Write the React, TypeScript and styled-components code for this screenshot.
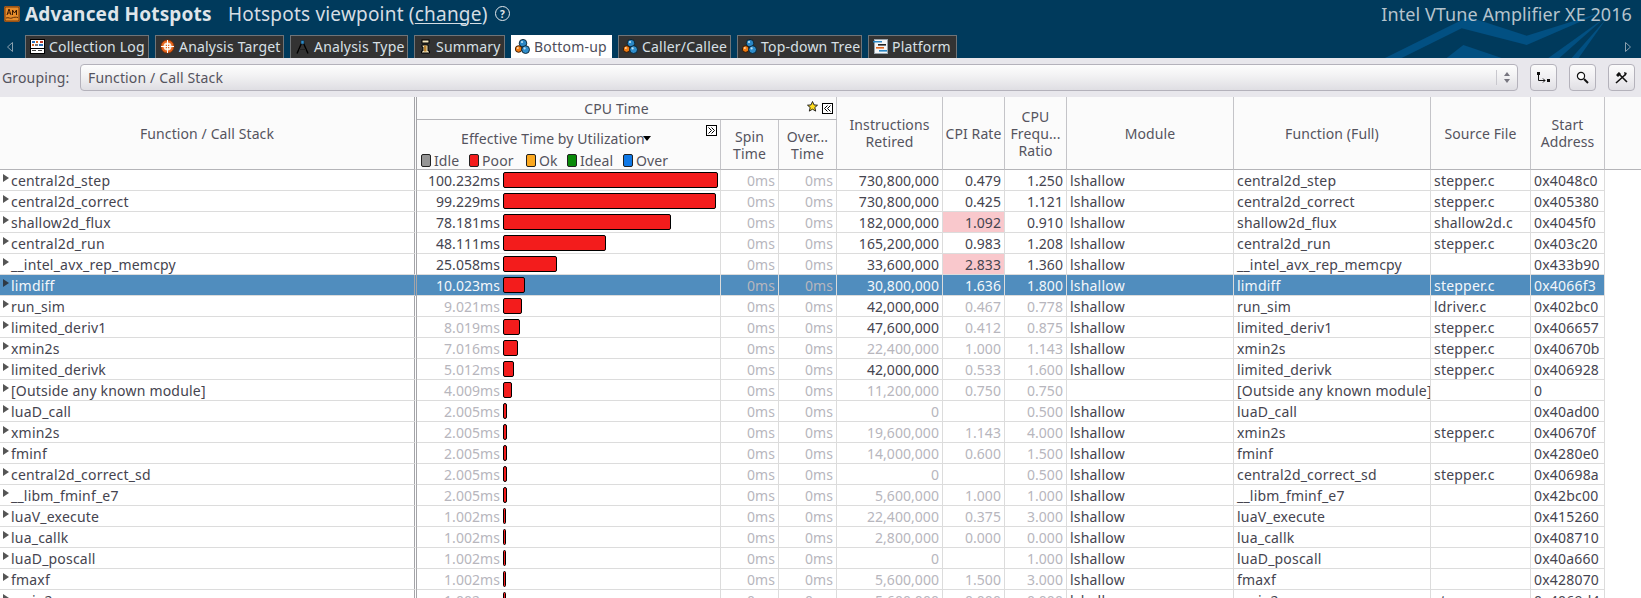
import React from "react";
import styled, { createGlobalStyle } from "styled-components";

const FONT = `"Noto Sans", "Open Sans", "DejaVu Sans", sans-serif`;
const COLS = "417px 304px 58px 58px 106px 62px 62px 167px 197px 100px 74px 1fr";

const Global = createGlobalStyle`
  html, body { margin: 0; padding: 0; background: #fff; overflow: hidden; }
  body { width: 1641px; height: 598px; font-family: ${FONT}; }
`;

const Page = styled.div`
  width: 1641px; height: 598px; overflow: hidden; display: flex; flex-direction: column;
`;
const Banner = styled.header`
  position: relative; height: 58px; background: #003a5c; color: #e4e8ec; overflow: hidden; flex: none;
`;
const Art = styled.svg`
  position: absolute; right: 0; top: 0; width: 441px; height: 58px;
`;
const TitleRow = styled.div`
  position: relative; display: flex; align-items: center; height: 35px; padding: 0 0 8px 4px; box-sizing: border-box;
`;
const TitleStrong = styled.span`
  font-size: 19px; font-weight: 700; margin-left: 5px; width: 203px; color: #dfe5ea; letter-spacing: 0.18px; white-space: nowrap;
`;
const TitleView = styled.span`
  font-size: 19px; color: #d5dde3; width: 265px; white-space: nowrap; letter-spacing: 0.2px;
  u { text-underline-offset: 2px; text-decoration-thickness: 1px; }
`;
const Help = styled.span`
  width: 13px; height: 13px; margin-left: 2px; border: 1px solid #e4e8ec; border-radius: 50%; font-size: 10px;
  display: flex; align-items: center; justify-content: center; font-weight: 700;
`;
const Product = styled.span`
  position: absolute; right: 9px; top: 2px; font-size: 18px; color: #b5c3cd; letter-spacing: 0.08px;
`;
const TabRow = styled.nav`
  position: relative; display: flex; gap: 6px; height: 23px; padding-left: 25px;
`;
const Arrow = styled.span<{ $side: "l" | "r" }>`
  position: absolute; top: 7px; ${(p) => (p.$side === "l" ? "left: 7px;" : "right: 10px;")}
  width: 6px; height: 10px; display: block;
  svg { display: block; }
`;
const Tab = styled.div<{ $w: number; $active?: boolean }>`
  width: ${(p) => p.$w}px; height: 23px; box-sizing: border-box; display: flex; align-items: center; gap: 4px;
  padding-left: 4px; padding-bottom: 1px; font-size: 14px; white-space: nowrap; letter-spacing: 0.2px;
  background: ${(p) => (p.$active ? "#fff" : "#333333")};
  color: ${(p) => (p.$active ? "#4d4d5a" : "#d8e0e6")};
  border: ${(p) => (p.$active ? "none" : "1px solid #6f7478")};
  border-bottom: none;
  svg { flex: none; }
`;
const Toolbar = styled.div`
  height: 39px; flex: none; background: #e8e7ec; display: flex; align-items: center; box-sizing: border-box;
  padding: 0 5px 0 2px; font-size: 14px; color: #55545e; letter-spacing: 0.15px;
`;
const GroupLabel = styled.span` width: 78px; flex: none; margin-top: -1px; `;
const Combo = styled.div`
  width: 1438px; height: 27px; box-sizing: border-box; margin-top: -1px; flex: none; border: 1px solid #b4b2bb; border-radius: 4px;
  background: linear-gradient(#fdfdfd, #f3f3f4 40%, #dfdee3);
  display: flex; align-items: center; justify-content: space-between; padding-left: 7px;
`;
const ComboArrows = styled.span`
  width: 20px; height: 15px; border-left: 1px solid #c9c8ce; display: flex; flex-direction: column; align-items: center; justify-content: center; gap: 3px;
  i { display: block; width: 0; height: 0; border-left: 3.5px solid transparent; border-right: 3.5px solid transparent; }
  i:first-child { border-bottom: 4px solid #77767f; }
  i:last-child { border-top: 4px solid #77767f; }
`;
const ToolButton = styled.button`
  width: 27px; height: 27px; padding: 0; margin: -1px 0 0 12px; box-sizing: border-box; border: 1px solid #b4b2bb; border-radius: 4px;
  background: linear-gradient(#fbfbfb, #f0eff2 50%, #e0dfe4); display: flex; align-items: center; justify-content: center;
`;
const HeaderGrid = styled.div`
  display: grid; grid-template-columns: ${COLS}; grid-template-rows: 23px 50px; height: 73px; flex: none;
  background: #fbfbfb; color: #55545e; font-size: 14px; line-height: 17px; letter-spacing: 0.1px;
`;
const HeadCell = styled.div<{ $col: string; $row: string; $sash?: boolean; $line?: boolean; $pad?: number }>`
  grid-column: ${(p) => p.$col}; grid-row: ${(p) => p.$row}; position: relative; box-sizing: border-box;
  display: flex; align-items: center; justify-content: center; text-align: center; white-space: nowrap;
  padding-right: ${(p) => p.$pad ?? 0}px;
  border-right: ${(p) => (p.$sash ? "3px double #a4a4a8" : p.$line === false ? "none" : "1px solid #c4c4c8")};
  border-bottom: 1px solid #b4b4b8;
`;
const StackedHead = styled.span`
  display: block;
`;
const EffCell = styled(HeadCell)`
  display: block;
`;
const EffTitle = styled.div`
  height: 33px; padding: 5px 0 2px 44px; box-sizing: border-box; display: flex; align-items: center; white-space: nowrap;
  i { display: block; margin-left: -2px; margin-top: 1px; width: 0; height: 0; border-left: 4px solid transparent; border-right: 4px solid transparent; border-top: 5px solid #000; }
`;
const Legend = styled.div`
  display: flex; gap: 4px; padding-left: 4px; align-items: center; height: 15px;
`;
const LegendItem = styled.span<{ $c: string; $w: number }>`
  display: flex; align-items: center; width: ${(p) => p.$w}px; flex: none; gap: 3px;
  &::before { content: ""; width: 8px; height: 11px; border: 1px solid #222; border-radius: 2px; background: ${(p) => p.$c}; flex: none; }
`;
const MiniBox = styled.span<{ $r: number; $t: number }>`
  position: absolute; right: ${(p) => p.$r}px; top: ${(p) => p.$t}px; width: 11px; height: 11px; box-sizing: border-box;
  border: 1px solid #000; background: #fff; display: flex; align-items: center; justify-content: center;
  svg { display: block; }
`;
const Star = styled.svg`
  position: absolute; right: 18px; top: 4px;
`;
const Row = styled.div`
  display: grid; grid-template-columns: ${COLS}; height: 21px; flex: none;
  font-size: 14px; line-height: 22px;
`;
const Cell = styled.div<{ $tone?: "dark" | "gray" | "white" | "zero"; $right?: boolean; $pink?: boolean; $sash?: boolean; $sel?: boolean }>`
  box-sizing: border-box; height: 21px; padding: 0 3px; white-space: nowrap; overflow: hidden;
  border-bottom: 1px solid #dcdcdc; border-right: ${(p) => (p.$sash ? "3px double #a4a4a8" : "1px solid #dcdcdc")};
  text-align: ${(p) => (p.$right ? "right" : "left")};
  letter-spacing: ${(p) => (p.$right ? "0.05px" : "0.2px")};
  background: ${(p) => (p.$sel ? "#508dbe" : p.$pink ? "#f9c8cc" : "#fff")};
  color: ${(p) => ({ dark: "#45444f", gray: "#b7b6bd", white: "#f4f7fa", zero: "#b7b6bd" }[p.$tone ?? "dark"])};
`;
const NameCell = styled(Cell)`
  display: flex; align-items: flex-start; padding-left: 3px;
`;
const Twist = styled.i<{ $sel?: boolean }>`
  display: block; width: 0; height: 0; flex: none; margin: 4px 2px 0 0;
  border-top: 4px solid transparent; border-bottom: 4px solid transparent; border-left: 6px solid ${(p) => (p.$sel ? "#2f3a44" : "#555")};
`;
const TimeCell = styled(Cell)`
  display: flex; align-items: flex-start; padding: 0; letter-spacing: 0.05px;
`;
const TimeValue = styled.span`
  width: 83px; text-align: right; flex: none;
`;
const Bar = styled.span`
  display: block; margin: 2px 0 0 3px; height: 16px; box-sizing: border-box; background: #f31c1c; border: 1px solid #000; border-radius: 2px;
`;
const Filler = styled.div``;

type R = { n: string; t: string; i: string; c: string; f: string; m?: boolean; s: string; a: string; pink?: boolean; iDark?: boolean; cDark?: boolean };

const rows: R[] = [
  { n: "central2d_step", t: "100.232", i: "730,800,000", c: "0.479", f: "1.250", s: "stepper.c", a: "0x4048c0", iDark: true, cDark: true },
  { n: "central2d_correct", t: "99.229", i: "730,800,000", c: "0.425", f: "1.121", s: "stepper.c", a: "0x405380", iDark: true, cDark: true },
  { n: "shallow2d_flux", t: "78.181", i: "182,000,000", c: "1.092", f: "0.910", s: "shallow2d.c", a: "0x4045f0", iDark: true, cDark: true, pink: true },
  { n: "central2d_run", t: "48.111", i: "165,200,000", c: "0.983", f: "1.208", s: "stepper.c", a: "0x403c20", iDark: true, cDark: true },
  { n: "__intel_avx_rep_memcpy", t: "25.058", i: "33,600,000", c: "2.833", f: "1.360", s: "", a: "0x433b90", iDark: true, cDark: true, pink: true },
  { n: "limdiff", t: "10.023", i: "30,800,000", c: "1.636", f: "1.800", s: "stepper.c", a: "0x4066f3", iDark: true, cDark: true },
  { n: "run_sim", t: "9.021", i: "42,000,000", c: "0.467", f: "0.778", s: "ldriver.c", a: "0x402bc0", iDark: true },
  { n: "limited_deriv1", t: "8.019", i: "47,600,000", c: "0.412", f: "0.875", s: "stepper.c", a: "0x406657", iDark: true },
  { n: "xmin2s", t: "7.016", i: "22,400,000", c: "1.000", f: "1.143", s: "stepper.c", a: "0x40670b" },
  { n: "limited_derivk", t: "5.012", i: "42,000,000", c: "0.533", f: "1.600", s: "stepper.c", a: "0x406928", iDark: true },
  { n: "[Outside any known module]", t: "4.009", i: "11,200,000", c: "0.750", f: "0.750", s: "", a: "0", m: false },
  { n: "luaD_call", t: "2.005", i: "0", c: "", f: "0.500", s: "", a: "0x40ad00" },
  { n: "xmin2s", t: "2.005", i: "19,600,000", c: "1.143", f: "4.000", s: "stepper.c", a: "0x40670f" },
  { n: "fminf", t: "2.005", i: "14,000,000", c: "0.600", f: "1.500", s: "", a: "0x4280e0" },
  { n: "central2d_correct_sd", t: "2.005", i: "0", c: "", f: "0.500", s: "stepper.c", a: "0x40698a" },
  { n: "__libm_fminf_e7", t: "2.005", i: "5,600,000", c: "1.000", f: "1.000", s: "", a: "0x42bc00" },
  { n: "luaV_execute", t: "1.002", i: "22,400,000", c: "0.375", f: "3.000", s: "", a: "0x415260" },
  { n: "lua_callk", t: "1.002", i: "2,800,000", c: "0.000", f: "0.000", s: "", a: "0x408710" },
  { n: "luaD_poscall", t: "1.002", i: "0", c: "", f: "1.000", s: "", a: "0x40a660" },
  { n: "fmaxf", t: "1.002", i: "5,600,000", c: "1.500", f: "3.000", s: "", a: "0x428070" },
  { n: "xmin2s", t: "1.002", i: "5,600,000", c: "0.000", f: "0.000", s: "stepper.c", a: "0x4069d4" },
];

const Balls = () => (
  <svg width="15" height="15" viewBox="0 0 15 15">
    <circle cx="8" cy="4.2" r="3.8" fill="#2a86c4" stroke="#08202e" strokeWidth="0.9" />
    <circle cx="3.6" cy="10" r="3.3" fill="#ef7a12" stroke="#2a1504" strokeWidth="0.9" />
    <circle cx="10.6" cy="10.6" r="3.9" fill="#2f8dcb" stroke="#08202e" strokeWidth="0.9" />
    <circle cx="7" cy="3" r="1.1" fill="#bfe3f7" />
    <circle cx="2.8" cy="9" r="1" fill="#ffd9a8" />
    <circle cx="9.6" cy="9.4" r="1.1" fill="#bfe3f7" />
  </svg>
);
const LogIcon = () => (
  <svg width="15" height="15" viewBox="0 0 15 15">
    <rect x="0.5" y="0.5" width="14" height="14" fill="#fff" stroke="#000" />
    <rect x="2" y="2" width="3" height="2" fill="#2a6fb8" /><rect x="6" y="2" width="2" height="2" fill="#d8651f" /><rect x="10" y="2" width="3" height="2" fill="#c03a2a" />
    <rect x="2" y="5" width="2" height="2" fill="#d8651f" /><rect x="5" y="5" width="3" height="2" fill="#777" /><rect x="9" y="5" width="4" height="2" fill="#2a6fb8" />
    <rect x="1" y="9" width="13" height="1" fill="#000" />
    <rect x="2" y="11" width="4" height="1" fill="#444" /><rect x="8" y="11" width="4" height="1" fill="#444" />
  </svg>
);
const TargetIcon = () => (
  <svg width="15" height="15" viewBox="0 0 15 15">
    <circle cx="7.5" cy="7.5" r="6.6" fill="#e5651d" stroke="#7c2f06" strokeWidth="0.8" />
    <circle cx="7.5" cy="7.5" r="4" fill="#fbe9d8" />
    <circle cx="7.5" cy="7.5" r="2" fill="#e5651d" />
    <path d="M7.5 1v13M1 7.5h13" stroke="#fff" strokeWidth="1" />
  </svg>
);
const CompassIcon = () => (
  <svg width="15" height="16" viewBox="0 0 15 16">
    <path d="M7.5 2L2 14.5M7.5 2L13 14.5" stroke="#000" strokeWidth="1.4" fill="none" />
    <path d="M4 10.5h7" stroke="#222" strokeWidth="1" />
    <path d="M6 1.5h3V5H6z" fill="#2f8dcb" stroke="#0a2c44" strokeWidth="0.6" />
  </svg>
);
const InfoIcon = () => (
  <svg width="13" height="15" viewBox="0 0 13 15">
    <rect x="3" y="1" width="7" height="3" fill="#f5e7c0" stroke="#000" />
    <path d="M3 6h6v6h1.5v2h-8v-2H4V8H3z" fill="#f5e7c0" stroke="#000" strokeWidth="1" />
    <rect x="5" y="6.5" width="2.5" height="6" fill="#b8812c" />
  </svg>
);
const PlatformIcon = () => (
  <svg width="15" height="15" viewBox="0 0 15 15">
    <rect x="1.5" y="0.5" width="13" height="14" fill="#f4f6f8" stroke="#9aa5ad" />
    <rect x="0" y="2" width="9" height="1.5" fill="#2a86c4" />
    <rect x="5" y="5" width="8" height="1.6" fill="#222" />
    <rect x="3" y="8" width="8" height="1.6" fill="#e5651d" />
    <rect x="6" y="11" width="8" height="1.6" fill="#2a86c4" />
  </svg>
);

const tabs: { label: string; w: number; icon: React.ReactNode; active?: boolean }[] = [
  { label: "Collection Log", w: 124, icon: <LogIcon /> },
  { label: "Analysis Target", w: 129, icon: <TargetIcon /> },
  { label: "Analysis Type", w: 118, icon: <CompassIcon /> },
  { label: "Summary", w: 91, icon: <InfoIcon /> },
  { label: "Bottom-up", w: 101, icon: <Balls />, active: true },
  { label: "Caller/Callee", w: 113, icon: <Balls /> },
  { label: "Top-down Tree", w: 125, icon: <Balls /> },
  { label: "Platform", w: 89, icon: <PlatformIcon /> },
];

const Chevrons = ({ flip }: { flip?: boolean }) => (
  <svg width="7" height="7" viewBox="0 0 7 7">
    <path d={flip ? "M3.5 0.5L0.5 3.5l3 3M6.5 0.5l-3 3 3 3" : "M0.5 0.5l3 3-3 3M3.5 0.5l3 3-3 3"} fill="none" stroke="#000" strokeWidth="1" />
  </svg>
);

export default function App() {
  return (
    <Page>
      <Global />
      <Banner>
        <Art viewBox="0 0 1323 174">
          <g fill="#025082">
            <polygon points="555,174 805,50 980,107 1210,35 980,135 785,85 605,174" />
            <polygon points="740,174 790,135 905,174" />
            <polygon points="1045,174 1218,50 1078,174" />
            <polygon points="1115,174 1220,55 1136,174" />
          </g>
        </Art>
        <TitleRow>
          <svg width="16" height="16" viewBox="0 0 16 16">
            <rect width="16" height="16" rx="2" fill="#c96a1a" />
            <rect x="1" y="1" width="14" height="14" rx="1" fill="#e88d2c" stroke="#5c2d08" strokeWidth="0.8" />
            <path d="M3 9l2-6 2 6M4 7h2M8.5 9V4l2 3 2-3v5" stroke="#3a1a04" strokeWidth="1" fill="none" />
            <path d="M2 12c3-1 4 1 6 0s4-1 6-.5" stroke="#5c2d08" fill="none" />
          </svg>
          <TitleStrong>Advanced Hotspots</TitleStrong>
          <TitleView>Hotspots viewpoint (<u>change</u>)</TitleView>
          <Help>?</Help>
        </TitleRow>
        <Product>Intel VTune Amplifier XE 2016</Product>
        <TabRow>
          <Arrow $side="l"><svg width="6" height="10" viewBox="0 0 6 10"><path d="M5.5 .5L.5 5l5 4.5z" fill="none" stroke="#8aa0ae" /></svg></Arrow>
          {tabs.map((t) => (
            <Tab key={t.label} $w={t.w} $active={t.active}>{t.icon}{t.label}</Tab>
          ))}
          <Arrow $side="r"><svg width="6" height="10" viewBox="0 0 6 10"><path d="M.5 .5L5.5 5l-5 4.5z" fill="none" stroke="#8aa0ae" /></svg></Arrow>
        </TabRow>
      </Banner>
      <Toolbar>
        <GroupLabel>Grouping:</GroupLabel>
        <Combo>
          Function / Call Stack
          <ComboArrows><i /><i /></ComboArrows>
        </Combo>
        <ToolButton>
          <svg width="15" height="13" viewBox="0 0 15 13"><rect x="1" y="1" width="3" height="3" fill="#111" /><rect x="11" y="8" width="3" height="3" fill="#111" /><path d="M2.5 4v5.5H9M7 7.5l2 2-2 2" stroke="#111" fill="none" /></svg>
        </ToolButton>
        <ToolButton>
          <svg width="13" height="13" viewBox="0 0 13 13"><circle cx="5" cy="5" r="3.6" fill="#fff" stroke="#111" strokeWidth="1.2" /><path d="M8 8l4 4" stroke="#111" strokeWidth="2" /></svg>
        </ToolButton>
        <ToolButton>
          <svg width="13" height="13" viewBox="0 0 13 13"><path d="M1 12L11 3M3 2l9 9" stroke="#111" strokeWidth="1.6" /><path d="M1 4l3-3 2 2-3 3zM9 1l3 1-2 3" fill="#111" /></svg>
        </ToolButton>
      </Toolbar>
      <HeaderGrid>
        <HeadCell $col="1" $row="1 / 3" $sash>Function / Call Stack</HeadCell>
        <HeadCell $col="2 / 5" $row="1" $pad={20}>
          CPU Time
          <Star width="11" height="11" viewBox="0 0 11 11"><path d="M5.5 .5l1.5 3.4 3.5.3-2.7 2.3.9 3.6-3.2-1.9-3.2 1.9.9-3.6L.5 4.2l3.5-.3z" fill="#ffdc1e" stroke="#111" strokeWidth="0.9" /></Star>
          <MiniBox $r={3} $t={6}><Chevrons flip /></MiniBox>
        </HeadCell>
        <EffCell $col="2" $row="2">
          <EffTitle>Effective Time by Utilization<i /></EffTitle>
          <Legend>
            <LegendItem $c="#959595" $w={44}>Idle</LegendItem>
            <LegendItem $c="#f31c1c" $w={53}>Poor</LegendItem>
            <LegendItem $c="#fba81f" $w={37}>Ok</LegendItem>
            <LegendItem $c="#0a8a0a" $w={52}>Ideal</LegendItem>
            <LegendItem $c="#0f78e6" $w={54}>Over</LegendItem>
          </Legend>
          <MiniBox $r={3} $t={5}><Chevrons /></MiniBox>
        </EffCell>
        <HeadCell $col="3" $row="2"><StackedHead>Spin<br />Time</StackedHead></HeadCell>
        <HeadCell $col="4" $row="2"><StackedHead>Over...<br />Time</StackedHead></HeadCell>
        <HeadCell $col="5" $row="1 / 3"><StackedHead>Instructions<br />Retired</StackedHead></HeadCell>
        <HeadCell $col="6" $row="1 / 3">CPI Rate</HeadCell>
        <HeadCell $col="7" $row="1 / 3"><StackedHead>CPU<br />Frequ...<br />Ratio</StackedHead></HeadCell>
        <HeadCell $col="8" $row="1 / 3">Module</HeadCell>
        <HeadCell $col="9" $row="1 / 3">Function (Full)</HeadCell>
        <HeadCell $col="10" $row="1 / 3">Source File</HeadCell>
        <HeadCell $col="11" $row="1 / 3"><StackedHead>Start<br />Address</StackedHead></HeadCell>
        <HeadCell $col="12" $row="1 / 3" $line={false} />
      </HeaderGrid>
      {rows.map((r, idx) => {
        const sel = idx === 5;
        const top = idx < 6;
        const dark = sel ? "white" : "dark";
        const width = Math.max(3, parseFloat(r.t) * 2.15);
        return (
          <Row key={idx}>
            <NameCell $sash $sel={sel} $tone={dark}><Twist $sel={sel} />{r.n}</NameCell>
            <TimeCell $sel={sel} $tone={top ? dark : "gray"}>
              <TimeValue>{r.t}ms</TimeValue>
              <Bar style={{ width }} />
            </TimeCell>
            <Cell $sel={sel} $right $tone="zero">0ms</Cell>
            <Cell $sel={sel} $right $tone="zero">0ms</Cell>
            <Cell $sel={sel} $right $tone={r.iDark ? dark : "gray"}>{r.i}</Cell>
            <Cell $sel={sel} $right $pink={r.pink} $tone={r.cDark ? dark : "gray"}>{r.c}</Cell>
            <Cell $sel={sel} $right $tone={top ? dark : "gray"}>{r.f}</Cell>
            <Cell $sel={sel} $tone={dark}>{r.m === false ? "" : "lshallow"}</Cell>
            <Cell $sel={sel} $tone={dark}>{r.n}</Cell>
            <Cell $sel={sel} $tone={dark}>{r.s}</Cell>
            <Cell $sel={sel} $tone={dark}>{r.a}</Cell>
            <Filler />
          </Row>
        );
      })}
    </Page>
  );
}
